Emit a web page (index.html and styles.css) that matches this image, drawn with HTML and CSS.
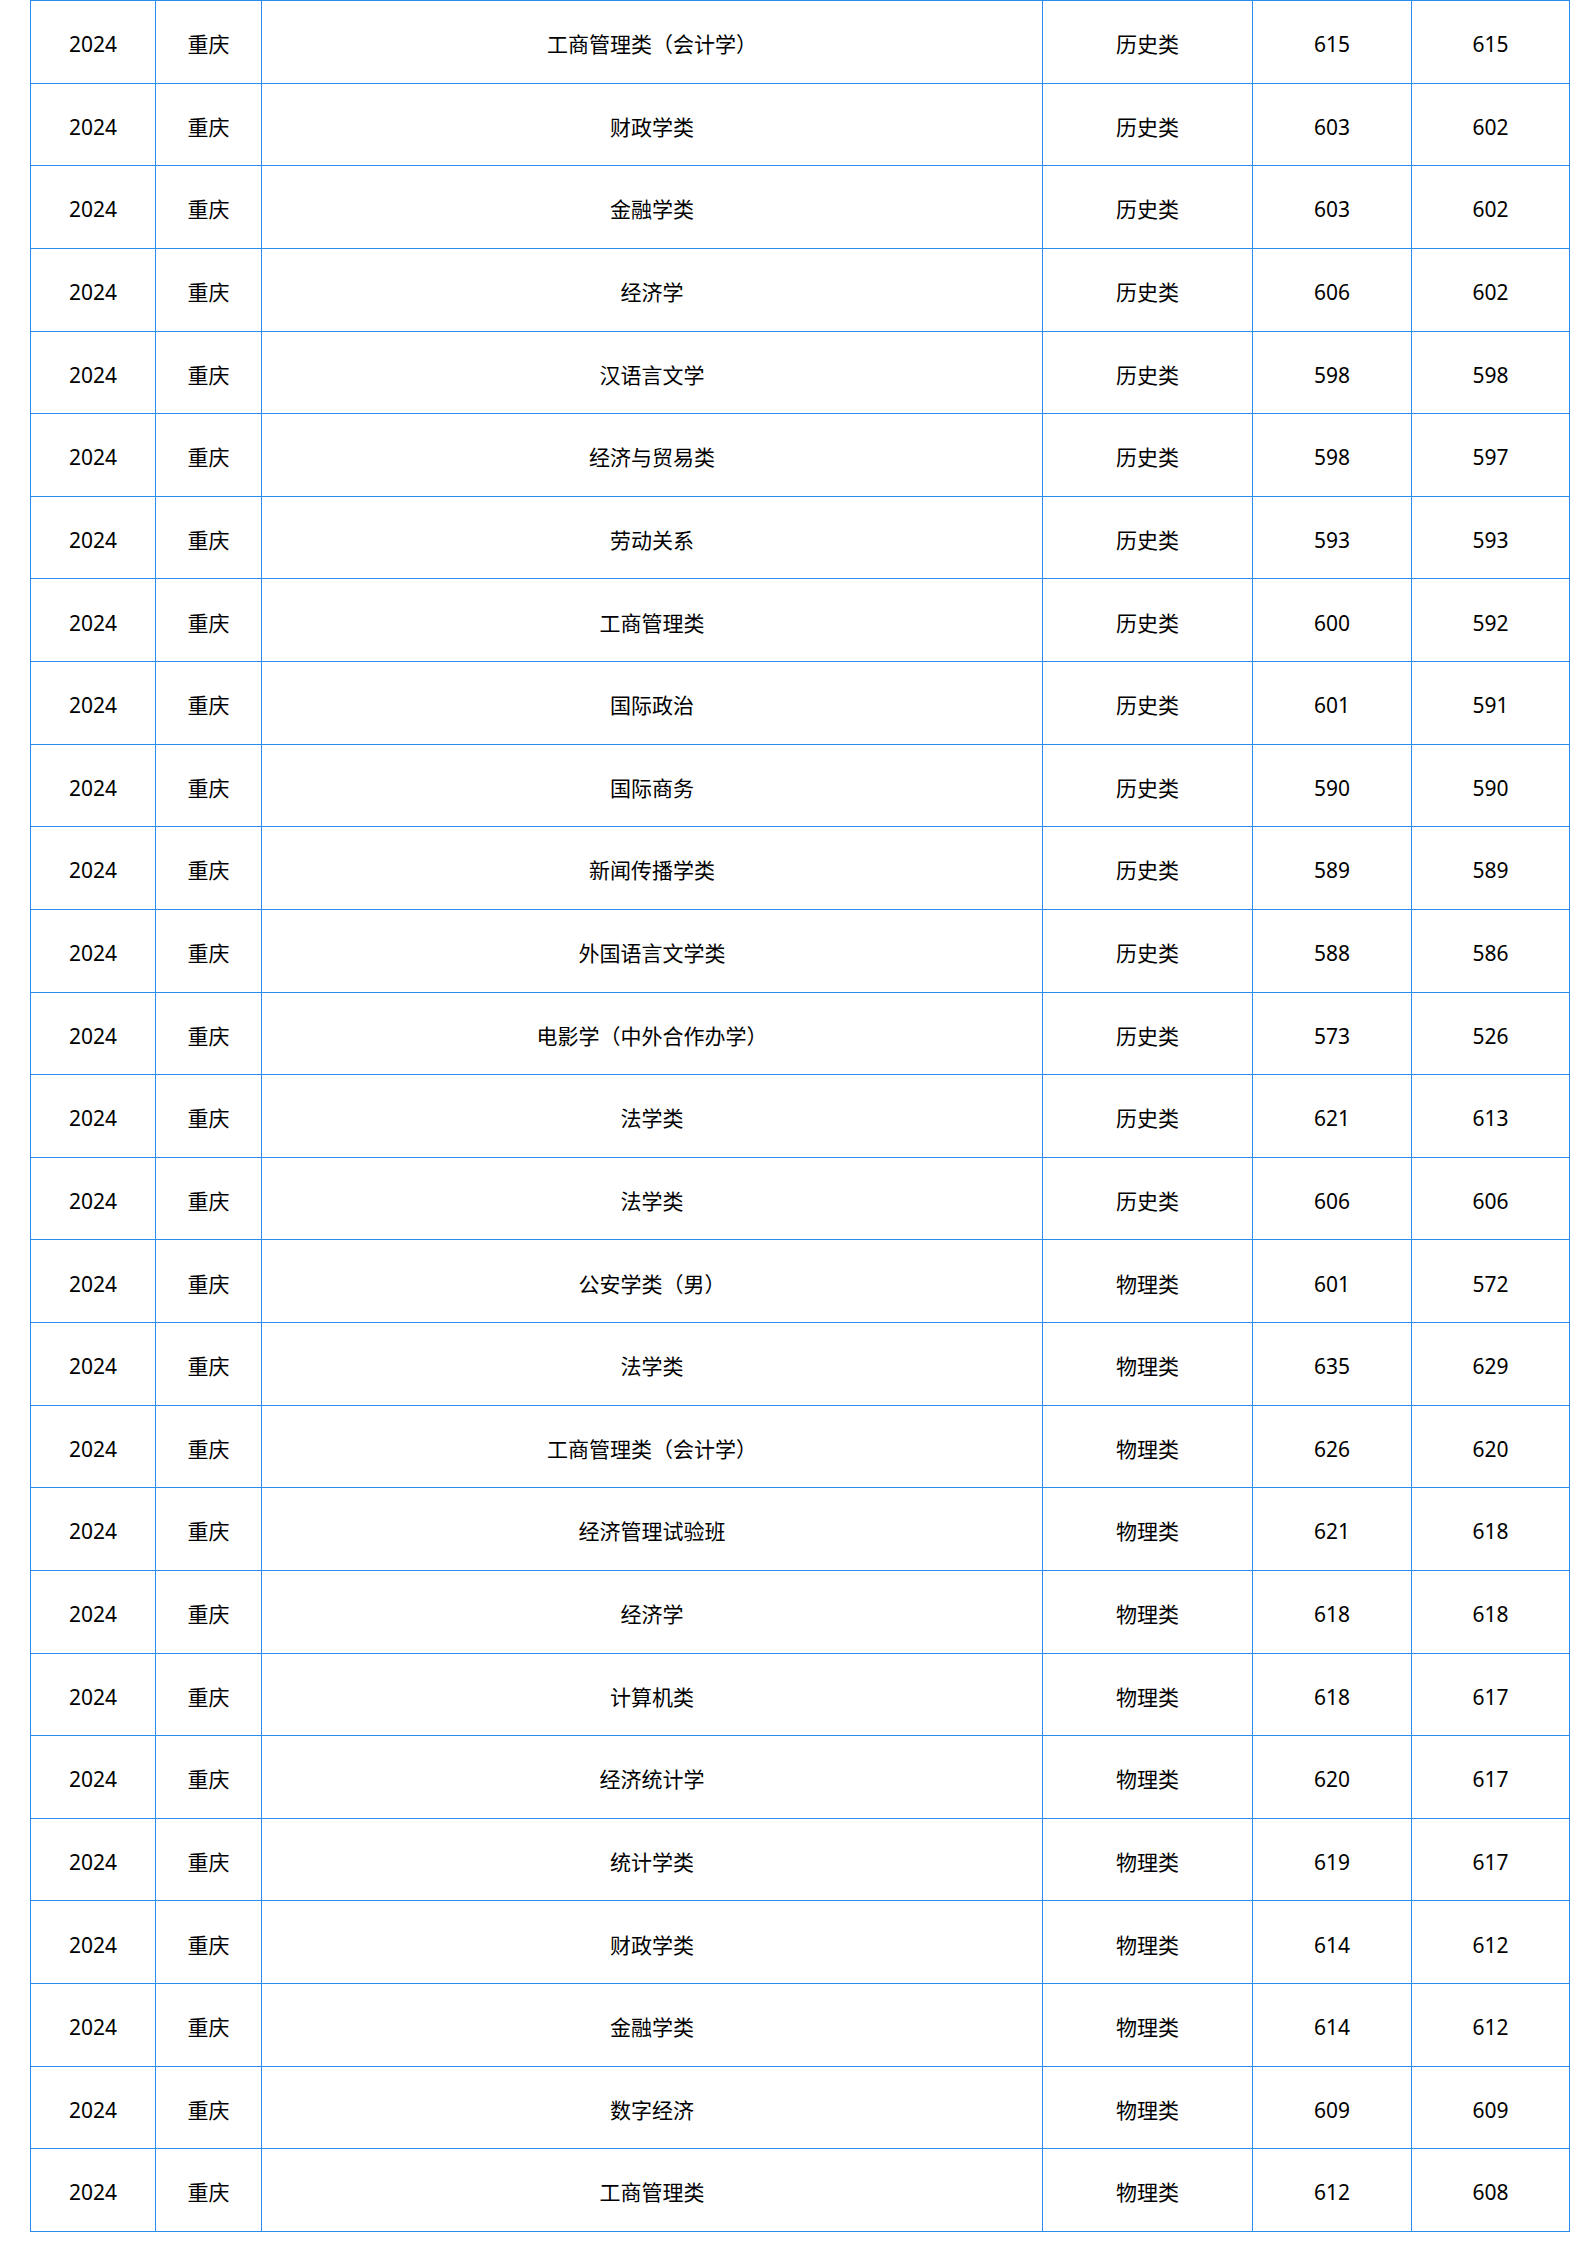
FILE: index.html
```html
<!DOCTYPE html>
<html lang="zh-CN">
<head>
<meta charset="utf-8">
<title>2024 重庆 录取分数</title>
<link rel="stylesheet" href="styles.css">
</head>
<body>
<table class="scores">
<colgroup>
<col class="c-year"><col class="c-prov"><col class="c-major"><col class="c-type"><col class="c-max"><col class="c-min">
</colgroup>
<tbody>
<tr><td>2024</td><td>重庆</td><td>工商管理类（会计学）</td><td>历史类</td><td>615</td><td>615</td></tr>
<tr><td>2024</td><td>重庆</td><td>财政学类</td><td>历史类</td><td>603</td><td>602</td></tr>
<tr><td>2024</td><td>重庆</td><td>金融学类</td><td>历史类</td><td>603</td><td>602</td></tr>
<tr><td>2024</td><td>重庆</td><td>经济学</td><td>历史类</td><td>606</td><td>602</td></tr>
<tr><td>2024</td><td>重庆</td><td>汉语言文学</td><td>历史类</td><td>598</td><td>598</td></tr>
<tr><td>2024</td><td>重庆</td><td>经济与贸易类</td><td>历史类</td><td>598</td><td>597</td></tr>
<tr><td>2024</td><td>重庆</td><td>劳动关系</td><td>历史类</td><td>593</td><td>593</td></tr>
<tr><td>2024</td><td>重庆</td><td>工商管理类</td><td>历史类</td><td>600</td><td>592</td></tr>
<tr><td>2024</td><td>重庆</td><td>国际政治</td><td>历史类</td><td>601</td><td>591</td></tr>
<tr><td>2024</td><td>重庆</td><td>国际商务</td><td>历史类</td><td>590</td><td>590</td></tr>
<tr><td>2024</td><td>重庆</td><td>新闻传播学类</td><td>历史类</td><td>589</td><td>589</td></tr>
<tr><td>2024</td><td>重庆</td><td>外国语言文学类</td><td>历史类</td><td>588</td><td>586</td></tr>
<tr><td>2024</td><td>重庆</td><td>电影学（中外合作办学）</td><td>历史类</td><td>573</td><td>526</td></tr>
<tr><td>2024</td><td>重庆</td><td>法学类</td><td>历史类</td><td>621</td><td>613</td></tr>
<tr><td>2024</td><td>重庆</td><td>法学类</td><td>历史类</td><td>606</td><td>606</td></tr>
<tr><td>2024</td><td>重庆</td><td>公安学类（男）</td><td>物理类</td><td>601</td><td>572</td></tr>
<tr><td>2024</td><td>重庆</td><td>法学类</td><td>物理类</td><td>635</td><td>629</td></tr>
<tr><td>2024</td><td>重庆</td><td>工商管理类（会计学）</td><td>物理类</td><td>626</td><td>620</td></tr>
<tr><td>2024</td><td>重庆</td><td>经济管理试验班</td><td>物理类</td><td>621</td><td>618</td></tr>
<tr><td>2024</td><td>重庆</td><td>经济学</td><td>物理类</td><td>618</td><td>618</td></tr>
<tr><td>2024</td><td>重庆</td><td>计算机类</td><td>物理类</td><td>618</td><td>617</td></tr>
<tr><td>2024</td><td>重庆</td><td>经济统计学</td><td>物理类</td><td>620</td><td>617</td></tr>
<tr><td>2024</td><td>重庆</td><td>统计学类</td><td>物理类</td><td>619</td><td>617</td></tr>
<tr><td>2024</td><td>重庆</td><td>财政学类</td><td>物理类</td><td>614</td><td>612</td></tr>
<tr><td>2024</td><td>重庆</td><td>金融学类</td><td>物理类</td><td>614</td><td>612</td></tr>
<tr><td>2024</td><td>重庆</td><td>数字经济</td><td>物理类</td><td>609</td><td>609</td></tr>
<tr><td>2024</td><td>重庆</td><td>工商管理类</td><td>物理类</td><td>612</td><td>608</td></tr>
</tbody>
</table>
</body>
</html>
```

FILE: styles.css
```css
html, body {
  margin: 0;
  padding: 0;
  background: #ffffff;
}

body {
  padding-left: 30px;
  font-family: "Noto Sans", "Noto Sans CJK SC", sans-serif;
  font-size: 21px;
  color: #000000;
}

.scores {
  border-collapse: collapse;
  table-layout: fixed;
  width: 1540px;
}

.c-year { width: 125px; }
.c-prov { width: 106px; }
.c-major { width: 781px; }
.c-type { width: 210px; }
.c-max { width: 159px; }
.c-min { width: 158px; }

.scores tr {
  height: 82.63px;
}

.scores td {
  border: 1px solid #2a8ef0;
  padding: 6px 0 0 0;
  text-align: center;
  vertical-align: middle;
  line-height: 1.3;
  white-space: nowrap;
}
```
